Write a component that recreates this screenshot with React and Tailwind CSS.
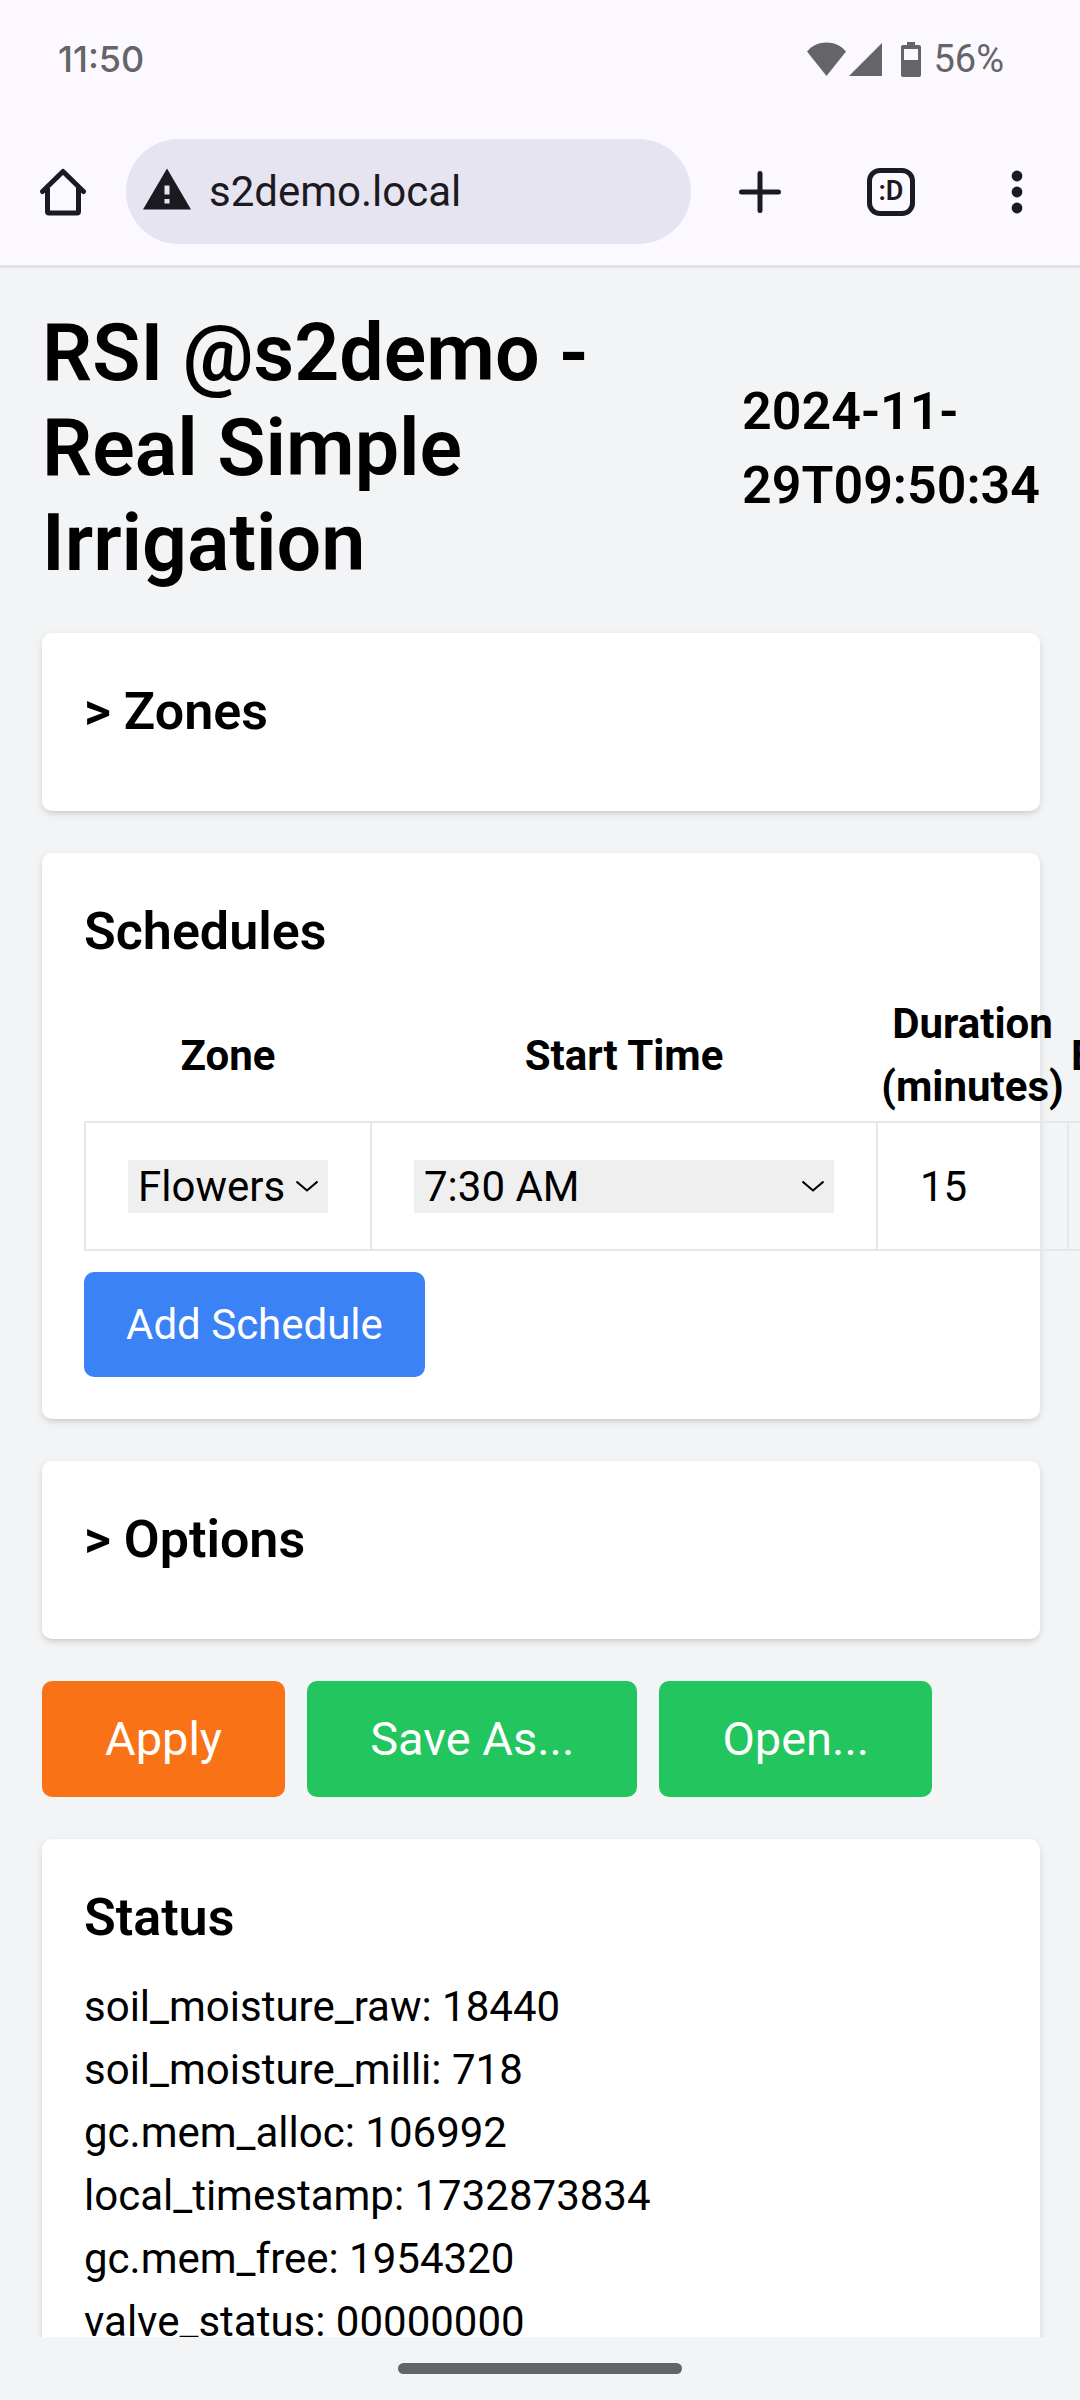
import { useState } from "react";

const STATUS = [
  ["soil_moisture_raw", "18440"],
  ["soil_moisture_milli", "718"],
  ["gc.mem_alloc", "106992"],
  ["local_timestamp", "1732873834"],
  ["gc.mem_free", "1954320"],
  ["valve_status", "00000000"],
];

function StatusBar() {
  return (
    <div className="flex h-[118px] shrink-0 items-center justify-between pl-[58px] pr-[76px] font-medium text-[#656467]">
      <span className="font-[Inter,sans-serif] text-[36px]">11:50</span>
      <div className="flex items-center">
        <svg viewBox="0 0 39 34" className="h-[34px] w-[39px]" fill="currentColor" aria-hidden="true">
          <path d="M0 9.5C5 3.500 12 0.500 19.500 0.500S34 3.500 39 9.500L19.500 34z" />
        </svg>
        <svg viewBox="0 0 33 34" className="ml-[3px] h-[34px] w-[33px]" fill="currentColor" aria-hidden="true">
          <path d="M33 1v33H0z" />
        </svg>
        <svg viewBox="0 0 20 35" className="ml-[19px] h-[35px] w-[20px]" fill="currentColor" aria-hidden="true">
          <path fillRule="evenodd" d="M6 0h8v3h4a2 2 0 0 1 2 2v28a2 2 0 0 1-2 2H2a2 2 0 0 1-2-2V5a2 2 0 0 1 2-2h4zM3 7v11h14V7z" />
        </svg>
        <span className="ml-3 text-[38px] font-normal">56%</span>
      </div>
    </div>
  );
}

function BrowserBar() {
  return (
    <div className="flex h-[150px] shrink-0 items-center border-b-[3px] border-[#e0e0e5] text-[#1c1a21]">
      <button type="button" aria-label="Home" className="flex h-full w-[126px] items-center justify-center">
        <svg viewBox="0 0 48 48" className="size-12" fill="none" stroke="currentColor" strokeWidth="5" aria-hidden="true">
          <path d="M3.500 23.500L24 3.500L44.500 23.500" strokeLinecap="round" strokeLinejoin="round" />
          <path d="M8.500 20v23.500a1.500 1.500 0 0 0 1.500 1.500h28a1.500 1.500 0 0 0 1.500-1.500V20" />
        </svg>
      </button>
      <div className="flex h-[105px] min-w-0 flex-1 items-center rounded-full bg-[#e6e4f0] pl-[17px] pr-8">
        <svg viewBox="0 0 48 48" className="size-12 shrink-0" aria-hidden="true">
          <path fill="currentColor" fillRule="evenodd" d="M24 0.500L48 41.500H0zM21.500 17.500v9h5v-9zM21.500 31v4.500h5v-4.500z" />
        </svg>
        <input
          type="text"
          aria-label="Address"
          defaultValue="s2demo.local"
          className="ml-[18px] min-w-0 flex-1 bg-transparent text-[42px] outline-none"
        />
      </div>
      <button type="button" aria-label="New tab" className="flex h-full w-[137px] items-center justify-center">
        <svg viewBox="0 0 44 44" className="size-11" fill="none" stroke="currentColor" strokeWidth="5" strokeLinecap="round" aria-hidden="true">
          <path d="M22 3.500v37M3.500 22h37" />
        </svg>
      </button>
      <button type="button" aria-label="Tabs" className="flex h-full w-[126px] items-center justify-center">
        <span className="flex size-12 items-center justify-center rounded-[13px] border-[5px] border-current text-[27px] font-semibold leading-none">
          :D
        </span>
      </button>
      <button type="button" aria-label="More" className="flex h-full w-[126px] items-center justify-center">
        <svg viewBox="0 0 12 44" className="h-11 w-3" fill="currentColor" aria-hidden="true">
          <circle cx="6" cy="6" r="5.400" />
          <circle cx="6" cy="22" r="5.400" />
          <circle cx="6" cy="38" r="5.400" />
        </svg>
      </button>
    </div>
  );
}

function Card({ title, onToggle, children }) {
  return (
    <section className="mb-[42px] rounded-[10px] bg-white p-[42px] shadow-[0_3px_8px_rgba(0,0,0,0.1),0_3px_5px_-2px_rgba(0,0,0,0.1)]">
      <h2 className="mb-[21px] text-[52px] font-semibold leading-[73px]">
        {onToggle ? (
          <button type="button" onClick={onToggle}>{title}</button>
        ) : (
          title
        )}
      </h2>
      {children}
    </section>
  );
}

function Select({ label, options, className }) {
  return (
    <div className={"relative " + className}>
      <select
        aria-label={label}
        className="block h-[53px] w-full appearance-none rounded-none bg-[#efefef] pl-[10px] pr-[42px] text-[42px] leading-[53px]"
      >
        {options.map((o) => (
          <option key={o}>{o}</option>
        ))}
      </select>
      <svg
        viewBox="0 0 22 11"
        className="pointer-events-none absolute right-[10px] top-[21px] h-[11px] w-[22px]"
        fill="none"
        stroke="black"
        strokeWidth="2"
        aria-hidden="true"
      >
        <path d="M0.500 0.500L11 9.500L21.500 0.500" />
      </svg>
    </div>
  );
}

function ScheduleTable() {
  return (
    <table className="w-full border-collapse">
      <thead>
        <tr>
          <th className="p-[3px]">Zone</th>
          <th className="p-[3px]">Start Time</th>
          <th className="p-[3px]">Duration (minutes)</th>
          <th className="p-[3px]">Enabled</th>
        </tr>
      </thead>
      <tbody>
        <tr className="h-[128px]">
          <td className="border-2 border-gray-200 px-[42px]">
            <Select label="Zone" options={["Flowers"]} className="w-[200px]" />
          </td>
          <td className="border-2 border-gray-200 px-[42px]">
            <Select label="Start time" options={["7:30 AM"]} className="w-[420px]" />
          </td>
          <td className="border-2 border-gray-200 px-[42px]">
            <input type="text" inputMode="numeric" aria-label="Duration in minutes" defaultValue="15" className="block w-[105px] bg-transparent" />
          </td>
          <td className="border-2 border-gray-200 px-[42px]">
            <input type="checkbox" aria-label="Enabled" defaultChecked className="block size-[34px]" />
          </td>
        </tr>
      </tbody>
    </table>
  );
}

export default function App() {
  const [zones, setZones] = useState(false);
  const [options, setOptions] = useState(false);
  return (
    <div className="flex h-screen flex-col overflow-hidden bg-gray-100 font-[Roboto,sans-serif] text-[42px] leading-[63px] text-black">
      <header className="shrink-0 bg-[#fbf8ff]">
        <StatusBar />
        <BrowserBar />
      </header>
      <main className="min-h-0 flex-1 overflow-hidden pl-[42px] pr-10 pt-[38px]">
        <div className="mb-[42px] flex items-center justify-between">
          <h1 className="w-[600px] text-[79px] font-semibold leading-[95px]">RSI @s2demo - Real Simple Irrigation</h1>
          <time className="w-min text-[52px] font-semibold leading-[74px]">2024-11-29T09:50:34</time>
        </div>
        <Card title={zones ? "v Zones" : "> Zones"} onToggle={() => setZones(!zones)} />
        <Card title="Schedules">
          <ScheduleTable />
          <button type="button" className="mt-[21px] block rounded-[10px] bg-[#3b82f6] px-[42px] py-[21px] text-white">
            Add Schedule
          </button>
        </Card>
        <Card title={options ? "v Options" : "> Options"} onToggle={() => setOptions(!options)} />
        <div className="mb-[42px] flex gap-[22px] text-[47px] leading-[74px] text-white">
          <button type="button" className="rounded-[10px] bg-[#f97316] px-[63px] py-[21px]">Apply</button>
          <button type="button" className="rounded-[10px] bg-[#22c55e] px-[63px] py-[21px]">Save As...</button>
          <button type="button" className="rounded-[10px] bg-[#22c55e] px-[63px] py-[21px]">Open...</button>
        </div>
        <Card title="Status">
          <ul>
            {STATUS.map(([key, value]) => (
              <li key={key}>{key}: {value}</li>
            ))}
          </ul>
        </Card>
      </main>
      <footer className="flex h-[63px] shrink-0 items-center justify-center bg-gray-100">
        <div className="h-[11px] w-[284px] rounded-full bg-[#636467]" />
      </footer>
    </div>
  );
}
